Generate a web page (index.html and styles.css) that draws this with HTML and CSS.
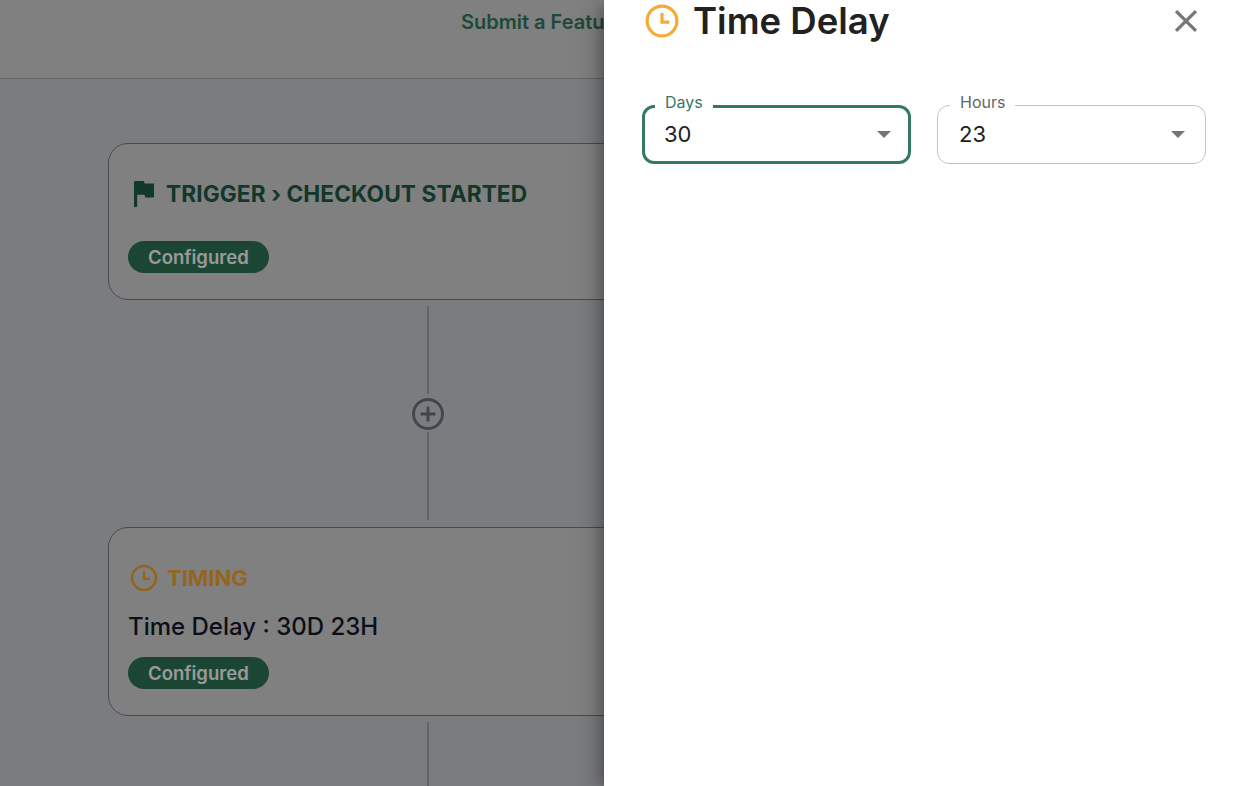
FILE: index.html
```html
<!DOCTYPE html>
<html lang="en">
<head>
    <meta charset="UTF-8">
    <title>Time Delay</title>
    <link rel="stylesheet" href="styles.css">
</head>
<body>
    <header class="topbar">
        <a class="topbar-link">Submit a Feature</a>
    </header>

    <main class="canvas">
        <section class="card card-trigger">
            <div class="card-title title-trigger">
                <svg class="icon-flag" viewBox="0 0 24 28"><path d="M2 2.5C2 1.7 2.6 1 3.4 1H12l.6 2.6H22v14h-8.8l-.6-2.8H5.2v11c0 .9-.7 1.4-1.6 1.4S2 26.700 2 25.800z"/></svg>
                <span>TRIGGER › CHECKOUT STARTED</span>
            </div>
            <span class="pill">Configured</span>
        </section>

        <div class="line"></div>
        <svg class="icon-add" viewBox="0 0 32 32"><circle cx="16" cy="16" r="14.500"/><path d="M16 8.500v15M8.500 16h15"/></svg>
        <div class="line line-mid"></div>

        <section class="card card-timing">
            <div class="card-title title-timing">
                <svg class="icon-clock" viewBox="0 0 28 28"><circle cx="14" cy="14" r="12"/><path d="M14 7.500V15h5.500"/></svg>
                <span>TIMING</span>
            </div>
            <div class="card-text">Time Delay : 30D 23H</div>
            <span class="pill">Configured</span>
        </section>

        <div class="line line-last"></div>
    </main>

    <div class="overlay"></div>

    <aside class="drawer">
        <div class="drawer-head">
            <svg class="icon-clock-big" viewBox="0 0 32 32"><circle cx="16" cy="16" r="14"/><path d="M16 8.500V17h7"/></svg>
            <h2>Time Delay</h2>
            <svg class="icon-close" viewBox="0 0 24 24"><path d="M19 6.410 17.590 5 12 10.590 6.410 5 5 6.410 10.590 12 5 17.590 6.410 19 12 13.410 17.590 19 19 17.590 13.410 12z"/></svg>
        </div>
        <div class="fields">
            <div class="field field-focus">
                <label>Days</label>
                <span>30</span>
                <i class="arrow"></i>
            </div>
            <div class="field">
                <label>Hours</label>
                <span>23</span>
                <i class="arrow"></i>
            </div>
        </div>
    </aside>
</body>
</html>
```

FILE: styles.css
```css
html, body {
    margin: 0;
    height: 100%;
    overflow: hidden;
}
body {
    position: relative;
    font-family: Inter, "Liberation Sans", sans-serif;
    background: #cdcfd5;
}
.topbar {
    height: 78px;
    box-sizing: content-box;
    background: #d5d5d5;
    border-bottom: 1px solid #a9a9a9;
    padding-left: 461px;
    display: flex;
}
.topbar-link {
    margin-top: 10px;
    font-size: 20px;
    line-height: 24px;
    font-weight: 600;
    color: #347a60;
    white-space: nowrap;
}
.canvas {
    width: 856px;
    display: flex;
    flex-direction: column;
    align-items: center;
    padding-top: 64px;
}
.card {
    width: 640px;
    box-sizing: border-box;
    background: #d5d5d5;
    border: 1px solid #7b7d85;
    border-radius: 20px;
    padding: 0 19px;
}
.card-trigger {
    height: 157px;
    padding-top: 36px;
}
.card-timing {
    height: 189px;
    padding-top: 36px;
}
.card-title {
    display: flex;
    align-items: center;
    font-size: 22.700px;
    line-height: 28px;
    font-weight: 700;
}
.title-trigger {
    color: #1e5d48;
    letter-spacing: 0.08px;
}
.title-timing {
    color: #f5a833;
    font-size: 22px;
}
.icon-flag {
    width: 24px;
    height: 28px;
    margin: 0 10px 0 4px;
    fill: #1e5d48;
}
.icon-clock {
    width: 28px;
    height: 28px;
    margin: 0 9px 0 2px;
    fill: none;
    stroke: #f5a833;
    stroke-width: 2.500;
}
.card-text {
    margin-top: 19px;
    font-size: 24px;
    line-height: 32px;
    font-weight: 500;
    color: #15182c;
}
.pill {
    display: inline-block;
    margin-top: 33px;
    padding: 0 20px;
    height: 32px;
    line-height: 33px;
    border-radius: 16px;
    background: #307557;
    color: #fff;
    font-size: 18.500px;
    font-weight: 600;
}
.card-timing .pill {
    margin-top: 14px;
}
.line {
    width: 2px;
    height: 88px;
    margin-top: 6px;
    background: #a9a9ab;
}
.line-mid {
    margin-top: 2px;
    margin-bottom: 7px;
}
.line-last {
    height: 70px;
}
.icon-add {
    width: 32px;
    height: 32px;
    margin-top: 4px;
    fill: none;
    stroke: #737680;
    stroke-width: 3;
}
.overlay {
    position: absolute;
    inset: 0;
    background: rgba(0, 0, 0, 0.4);
}
.drawer {
    position: absolute;
    top: 0;
    right: 0;
    bottom: 0;
    width: 640px;
    box-sizing: border-box;
    padding: 0 38px;
    background: #fff;
    box-shadow: -8px 0 10px -5px rgba(0,0,0,0.2), 0 16px 24px 2px rgba(0,0,0,0.14), 0 6px 30px 5px rgba(0,0,0,0.12);
}
.drawer-head {
    height: 42px;
    display: flex;
    align-items: center;
}
.drawer-head h2 {
    margin: 0;
    font-size: 36.500px;
    line-height: 42px;
    font-weight: 600;
    color: #212121;
}
.icon-clock-big {
    width: 34px;
    height: 34px;
    margin: 0 14px 0 3px;
    fill: none;
    stroke: #f5ac34;
    stroke-width: 3;
}
.icon-close {
    width: 38px;
    height: 38px;
    margin-left: auto;
    margin-right: 1px;
    fill: #757575;
}
.fields {
    margin-top: 63px;
    display: flex;
    gap: 26px;
}
.field {
    position: relative;
    flex: 1;
    height: 59px;
    box-sizing: border-box;
    border: 1px solid #c4c4c4;
    border-radius: 12px;
    padding: 0 21px 2px;
    display: flex;
    align-items: center;
    justify-content: space-between;
    font-size: 22px;
    color: #212121;
}
.field label {
    position: absolute;
    top: -14px;
    left: 12px;
    padding: 0 10px;
    font-size: 16px;
    line-height: 20px;
    color: #666;
    background: linear-gradient(transparent 12px, #fff 12px);
}
.field-focus {
    border: 3px solid #357a60;
    padding: 0 19px 2px;
}
.field-focus label {
    top: -16px;
    left: 10px;
    color: #357a60;
    background: linear-gradient(transparent 12px, #fff 12px);
}
.arrow {
    width: 0;
    height: 0;
    margin-right: -1px;
    margin-top: 2px;
    border-left: 7px solid transparent;
    border-right: 7px solid transparent;
    border-top: 7px solid #757575;
}
.field-focus .arrow {
    margin-right: -2px;
}
```
